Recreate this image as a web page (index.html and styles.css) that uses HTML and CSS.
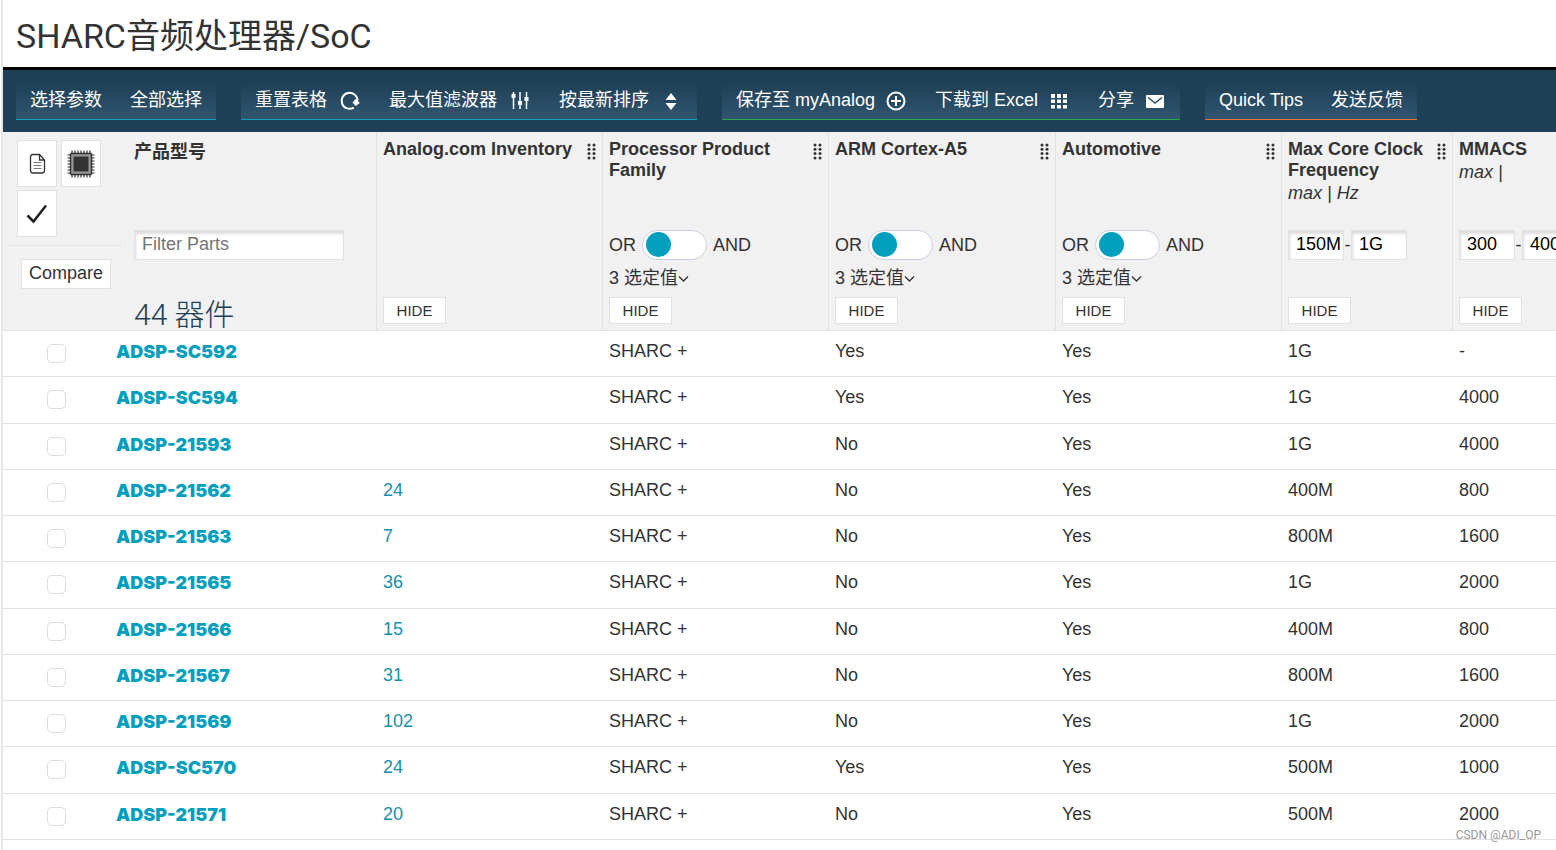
FILE: index.html
```html
<!DOCTYPE html>
<html lang="zh-CN">
<head>
<meta charset="utf-8">
<title>SHARC音频处理器/SoC</title>
<link rel="stylesheet" href="styles.css">
</head>
<body>
<main class="page">
  <h1 class="page-title">SHARC音频处理器/SoC</h1>

  <nav class="toolbar" aria-label="工具栏">
    <div class="tool-group">
      <button class="tool">选择参数</button>
      <button class="tool">全部选择</button>
    </div>
    <div class="tool-group">
      <button class="tool">重置表格
        <svg class="tool-icon" viewBox="0 0 22 22"><path d="M14.800 17.600A8 8 0 1 1 18.600 10.500" fill="none" stroke="#fff" stroke-width="2"/><path d="M13.500 12.500L17 8.800l3.800 4.200-4.200 3z" fill="#fff"/></svg>
      </button>
      <button class="tool">最大值滤波器
        <svg class="tool-icon" viewBox="0 0 22 22"><path d="M4.500 2v17M11 2v17M17.500 2v17" stroke="#fff" stroke-width="1.500"/><path d="M2.500 4h4v4h-4zM9 11h4v4H9zM15.500 7h4v4h-4z" fill="#fff"/></svg>
      </button>
      <button class="tool">按最新排序
        <svg class="tool-icon" viewBox="0 0 22 22"><path d="M4.500 10L10 3l5.500 7zM4.500 13h11L10 20z" fill="#fff"/></svg>
      </button>
    </div>
    <div class="tool-group tool-group-green">
      <button class="tool">保存至 myAnalog
        <svg class="tool-icon" viewBox="0 0 22 22"><circle cx="11" cy="11" r="8.500" fill="none" stroke="#fff" stroke-width="2"/><path d="M11 6v10M6 11h10" stroke="#fff" stroke-width="2"/></svg>
      </button>
      <button class="tool">下载到 Excel
        <svg class="tool-icon" viewBox="0 0 22 22"><path d="M3 4h4v4H3zM9 4h4v4H9zM15 4h4v4h-4zM3 9.500h4v3.500H3zM9 9.500h4v3.500H9zM15 9.500h4v3.500h-4zM3 15h4v3.500H3zM9 15h4v3.500H9zM15 15h4v3.500h-4z" fill="#fff"/></svg>
      </button>
      <button class="tool">分享
        <svg class="tool-icon" viewBox="0 0 22 22"><rect x="2" y="5" width="18" height="13" rx="1" fill="#fff"/><path d="M4 7.500l7 5.500 7-5.500" fill="none" stroke="#2a4d66" stroke-width="1.500"/></svg>
      </button>
    </div>
    <div class="tool-group tool-group-orange">
      <button class="tool">Quick Tips</button>
      <button class="tool">发送反馈</button>
    </div>
  </nav>

  <table class="parts">
    <colgroup>
      <col class="col-check"><col class="col-name"><col class="col-param"><col class="col-param"><col class="col-core"><col class="col-param"><col class="col-clock"><col>
    </colgroup>
    <thead>
      <tr>
        <th class="head-tools">
          <div class="icon-buttons">
            <button class="icon-button" aria-label="数据手册"><svg width="20" height="22" viewBox="0 0 20 22"><path d="M3.500 4Q3.500 1.500 6 1.500h6.500L17.500 7v10.500q0 2.500-2.500 2.500H6q-2.500 0-2.500-2.500zM12.500 1.500V7h5" fill="none" stroke="#333" stroke-width="1.300"/><path d="M6.500 9.500h8M6.500 12.500h8M6.500 15.500h8" stroke="#777"/></svg></button>
            <button class="icon-button" aria-label="芯片"><svg width="30" height="30" viewBox="0 0 30 30"><path d="M6 1.500v27M9 1.500v27M12 1.500v27M15 1.500v27M18 1.500v27M21 1.500v27M24 1.500v27M1.500 6h27M1.500 9h27M1.500 12h27M1.500 15h27M1.500 18h27M1.500 21h27M1.500 24h27" stroke="#333" stroke-width="1.200"/><rect x="4.500" y="4.500" width="21" height="21" rx="1" fill="#999" stroke="#333" stroke-width="1.500"/><path d="M7.500 7.500h15v15h-15z" fill="#333"/></svg></button>
            <button class="icon-button" aria-label="选择"><svg width="22" height="22" viewBox="0 0 22 22"><path d="M1.500 12.500l6 6L20 2.500" fill="none" stroke="#222" stroke-width="2.500"/></svg></button>
          </div>
          <hr class="tool-rule">
          <button class="compare">Compare</button>
        </th>
        <th class="head-name">
          <div class="head">
            <label class="name-title" for="filter">产品型号</label>
            <input class="field field-filter" id="filter" type="text" placeholder="Filter Parts">
            <div class="count">44 器件</div>
          </div>
        </th>
        <th class="head-param">
          <div class="head">
            <div class="head-title"><div>Analog.com Inventory</div><svg class="grip" viewBox="0 0 9 17"><use href="#dots"/></svg></div>
            <button class="hide">HIDE</button>
          </div>
        </th>
        <th class="head-param">
          <div class="head">
            <div class="head-title"><div>Processor Product Family</div><svg class="grip" viewBox="0 0 9 17"><g id="dots" fill="#333"><circle cx="2" cy="2" r="1.500"/><circle cx="7" cy="2" r="1.500"/><circle cx="2" cy="6.300" r="1.500"/><circle cx="7" cy="6.300" r="1.500"/><circle cx="2" cy="10.600" r="1.500"/><circle cx="7" cy="10.600" r="1.500"/><circle cx="2" cy="15" r="1.500"/><circle cx="7" cy="15" r="1.500"/></g></svg></div>
            <label class="logic">OR <input class="switch" type="checkbox" role="switch"> AND</label>
            <button class="values">3 选定值<svg width="11" height="8" viewBox="0 0 11 8"><path d="M1 1.500l4.500 4.500L10 1.500" fill="none" stroke="#333" stroke-width="1.300"/></svg></button>
            <button class="hide">HIDE</button>
          </div>
        </th>
        <th class="head-param">
          <div class="head">
            <div class="head-title"><div>ARM Cortex-A5</div><svg class="grip" viewBox="0 0 9 17"><use href="#dots"/></svg></div>
            <label class="logic">OR <input class="switch" type="checkbox" role="switch"> AND</label>
            <button class="values">3 选定值<svg width="11" height="8" viewBox="0 0 11 8"><path d="M1 1.500l4.500 4.500L10 1.500" fill="none" stroke="#333" stroke-width="1.300"/></svg></button>
            <button class="hide">HIDE</button>
          </div>
        </th>
        <th class="head-param">
          <div class="head">
            <div class="head-title"><div>Automotive</div><svg class="grip" viewBox="0 0 9 17"><use href="#dots"/></svg></div>
            <label class="logic">OR <input class="switch" type="checkbox" role="switch"> AND</label>
            <button class="values">3 选定值<svg width="11" height="8" viewBox="0 0 11 8"><path d="M1 1.500l4.500 4.500L10 1.500" fill="none" stroke="#333" stroke-width="1.300"/></svg></button>
            <button class="hide">HIDE</button>
          </div>
        </th>
        <th class="head-param">
          <div class="head">
            <div class="head-title"><div>Max Core Clock Frequency<div class="unit">max | Hz</div></div><svg class="grip" viewBox="0 0 9 17"><use href="#dots"/></svg></div>
            <div class="range"><input class="field" type="text" value="150M" aria-label="Frequency min"><span class="dash">-</span><input class="field" type="text" value="1G" aria-label="Frequency max"></div>
            <button class="hide">HIDE</button>
          </div>
        </th>
        <th class="head-param">
          <div class="head">
            <div class="head-title"><div>MMACS<div class="unit">max |</div></div></div>
            <div class="range"><input class="field" type="text" value="300" aria-label="MMACS min"><span class="dash">-</span><input class="field" type="text" value="4000" aria-label="MMACS max"></div>
            <button class="hide">HIDE</button>
          </div>
        </th>
      </tr>
    </thead>
    <tbody>
      <tr><td><input class="pick" type="checkbox" aria-label="ADSP-SC592"></td><td><a class="part" href="#">ADSP-SC592</a></td><td></td><td>SHARC +</td><td>Yes</td><td>Yes</td><td>1G</td><td>-</td></tr>
      <tr><td><input class="pick" type="checkbox" aria-label="ADSP-SC594"></td><td><a class="part" href="#">ADSP-SC594</a></td><td></td><td>SHARC +</td><td>Yes</td><td>Yes</td><td>1G</td><td>4000</td></tr>
      <tr><td><input class="pick" type="checkbox" aria-label="ADSP-21593"></td><td><a class="part" href="#">ADSP-21593</a></td><td></td><td>SHARC +</td><td>No</td><td>Yes</td><td>1G</td><td>4000</td></tr>
      <tr><td><input class="pick" type="checkbox" aria-label="ADSP-21562"></td><td><a class="part" href="#">ADSP-21562</a></td><td><a class="stock" href="#">24</a></td><td>SHARC +</td><td>No</td><td>Yes</td><td>400M</td><td>800</td></tr>
      <tr><td><input class="pick" type="checkbox" aria-label="ADSP-21563"></td><td><a class="part" href="#">ADSP-21563</a></td><td><a class="stock" href="#">7</a></td><td>SHARC +</td><td>No</td><td>Yes</td><td>800M</td><td>1600</td></tr>
      <tr><td><input class="pick" type="checkbox" aria-label="ADSP-21565"></td><td><a class="part" href="#">ADSP-21565</a></td><td><a class="stock" href="#">36</a></td><td>SHARC +</td><td>No</td><td>Yes</td><td>1G</td><td>2000</td></tr>
      <tr><td><input class="pick" type="checkbox" aria-label="ADSP-21566"></td><td><a class="part" href="#">ADSP-21566</a></td><td><a class="stock" href="#">15</a></td><td>SHARC +</td><td>No</td><td>Yes</td><td>400M</td><td>800</td></tr>
      <tr><td><input class="pick" type="checkbox" aria-label="ADSP-21567"></td><td><a class="part" href="#">ADSP-21567</a></td><td><a class="stock" href="#">31</a></td><td>SHARC +</td><td>No</td><td>Yes</td><td>800M</td><td>1600</td></tr>
      <tr><td><input class="pick" type="checkbox" aria-label="ADSP-21569"></td><td><a class="part" href="#">ADSP-21569</a></td><td><a class="stock" href="#">102</a></td><td>SHARC +</td><td>No</td><td>Yes</td><td>1G</td><td>2000</td></tr>
      <tr><td><input class="pick" type="checkbox" aria-label="ADSP-SC570"></td><td><a class="part" href="#">ADSP-SC570</a></td><td><a class="stock" href="#">24</a></td><td>SHARC +</td><td>Yes</td><td>Yes</td><td>500M</td><td>1000</td></tr>
      <tr><td><input class="pick" type="checkbox" aria-label="ADSP-21571"></td><td><a class="part" href="#">ADSP-21571</a></td><td><a class="stock" href="#">20</a></td><td>SHARC +</td><td>No</td><td>Yes</td><td>500M</td><td>2000</td></tr>
    </tbody>
  </table>
  <div class="watermark">CSDN @ADI_OP</div>
</main>
</body>
</html>
```
FILE: styles.css
```css
* { box-sizing: border-box; }

body {
  margin: 0;
  background: #fff;
  color: #333;
  font: 18px/21px "Liberation Sans", "Noto Sans CJK SC", sans-serif;
}

button, input { font: inherit; color: inherit; margin: 0; }

.page {
  position: relative;
  min-height: 100vh;
  margin-left: 1px;
  border-left: 2px solid #e8e8e8;
  overflow: hidden;
}

.page-title {
  margin: 0;
  padding: 16px 13px 11px;
  font: 400 34px/40px Roboto, "Noto Sans CJK SC", sans-serif;
}

/* Toolbar */
.toolbar {
  display: flex;
  gap: 25px;
  padding: 12px 13px;
  background: #1e4056;
  border-top: 3px solid #000;
}

.tool-group {
  display: flex;
  height: 38px;
  background: linear-gradient(#1e4056, #31556f);
  border-bottom: 1px solid #0fa0bd;
}
.tool-group-green { border-bottom-color: #27a84a; }
.tool-group-orange { border-bottom-color: #e8743b; }

.tool {
  display: flex;
  align-items: center;
  gap: 12px;
  padding: 0 14px;
  border: 0;
  background: none;
  color: #fff;
  white-space: nowrap;
}
.tool-icon { width: 22px; height: 22px; }
.tool-group-green .tool { gap: 10px; }

/* Parts table */
.parts {
  width: 100%;
  table-layout: fixed;
  border-collapse: separate;
  border-spacing: 0;
}
.col-check { width: 113px; }
.col-name { width: 260px; }
.col-param { width: 226px; }
.col-core { width: 227px; }
.col-clock { width: 171px; }

th {
  padding: 0;
  background: #f1f1f1;
  border-bottom: 1px solid #e1e1e1;
  text-align: left;
  vertical-align: top;
}
.head-param { padding: 0 6px; border-left: 1px solid #e1e1e1; }
.head-param:last-child { overflow: hidden; }
.head-name { padding-left: 18px; }
.head-tools { padding: 8px 0 0 6px; font-weight: 400; }

.icon-buttons {
  display: flex;
  flex-wrap: wrap;
  gap: 3px 4px;
  padding-left: 8px;
}
.icon-button {
  display: flex;
  align-items: center;
  justify-content: center;
  width: 40px;
  height: 47px;
  padding: 0;
  background: #fff;
  border: 1px solid #e1e1e1;
}
.tool-rule {
  position: relative;
  margin: 8px -6px 13px 0;
  border: 0;
  border-top: 1px solid #e1e1e1;
}
.compare {
  height: 30px;
  margin-left: 12px;
  padding: 0 7px 2px;
  background: #fff;
  border: 1px solid #e1e1e1;
}

.head {
  display: grid;
  grid-template-rows: 98px 30px 37px 27px 6px;
  justify-items: start;
  font-weight: 400;
}
.head-title {
  display: flex;
  justify-content: space-between;
  justify-self: stretch;
  padding-top: 7px;
  font-weight: 700;
}
.unit { margin-top: 2px; font-style: italic; font-weight: 400; }
.grip { flex: none; width: 9px; height: 17px; margin-top: 4px; }
.name-title { padding-top: 10px; font-weight: 700; }

.count {
  grid-row: 3 / 6;
  align-self: end;
  color: #1e4056;
  font: 300 30px/30px Roboto, "Noto Sans CJK SC", sans-serif;
}

.field {
  width: 56px;
  height: 30px;
  padding: 0 0 2px 7px;
  background: #fff;
  border: 1px solid #e1e1e1;
  border-radius: 0;
  box-shadow: inset 1px 3px 3px #ddd;
  color: #000;
}
.field-filter { width: 210px; }
.field::placeholder { color: #757575; }
.range { display: flex; align-items: center; }
.dash { width: 7px; text-align: center; }

.logic { display: flex; align-items: center; gap: 6px; }
.switch {
  appearance: none;
  width: 65px;
  height: 30px;
  padding: 1px 3px;
  background: #fff;
  border: 1px solid #c8d0e0;
  border-radius: 15px;
}
.switch::before {
  content: "";
  display: block;
  width: 25px;
  height: 25px;
  border-radius: 50%;
  background: #009fbd;
}
.values {
  display: flex;
  align-items: center;
  padding: 0;
  border: 0;
  background: none;
}
.hide {
  grid-row: 4;
  width: 63px;
  padding: 0;
  background: #fff;
  border: 1px solid #e1e1e1;
  font-size: 15px;
}

td {
  height: 46px;
  padding: 10px 0 0 7px;
  border-bottom: 1px solid #e1e1e1;
  vertical-align: top;
}
tbody tr:nth-child(4n + 2) td { height: 47px; }
td:first-child { padding: 13px 0 0 44px; }
td:nth-child(2) { padding-left: 0; }

.pick {
  display: block;
  appearance: none;
  width: 19px;
  height: 19px;
  background: #fff;
  border: 1px solid #ddd;
  border-radius: 5px;
}
.part {
  color: #009fbd;
  font-family: Inter, "Liberation Sans", sans-serif;
  font-weight: 900;
  text-decoration: none;
}
.stock { color: #1790ab; text-decoration: none; }

.watermark {
  position: absolute;
  right: 15px;
  bottom: 7px;
  color: #999;
  font: 12px/16px Roboto, sans-serif;
}
```
